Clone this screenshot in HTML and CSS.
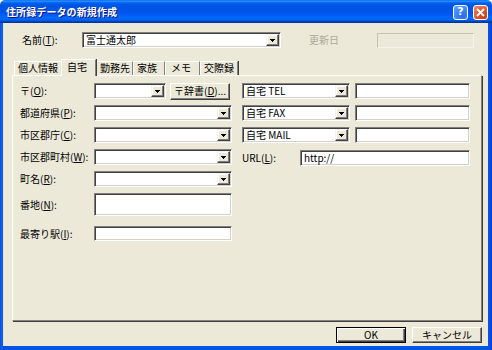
FILE: index.html
```html
<!DOCTYPE html>
<html lang="ja">
<head>
<meta charset="utf-8">
<title>住所録データの新規作成</title>
<link rel="stylesheet" href="styles.css">
</head>
<body>
<div class="window">
  <div class="titlebar">
    <span class="title">住所録データの新規作成</span>
    <div class="tb-buttons">
      <span class="tb-btn help">?</span>
      <span class="tb-btn close"><svg width="9" height="9" viewBox="0 0 9 9"><path d="M1 1 L8 8 M8 1 L1 8" stroke="#fff" stroke-width="1.8" fill="none"/></svg></span>
    </div>
  </div>
  <div class="frame">
    <div class="client">
      <div class="top-row">
        <span class="lbl name-lbl">名前(<u>T</u>):</span>
        <div class="field combo name-combo"><span class="val">富士通太郎</span><span class="drop"><span class="tri"></span></span></div>
        <span class="lbl date-lbl">更新日</span>
        <div class="date-box"></div>
      </div>
      <div class="tabs">
        <span class="tab t1">個人情報</span>
        <span class="tab t2 active">自宅</span>
        <span class="tab t3">勤務先</span>
        <span class="tab t4">家族</span>
        <span class="tab t5">メモ</span>
        <span class="tab t6">交際録</span>
      </div>
      <div class="panel">
        <div class="col left">
          <div class="row">
            <span class="lbl">〒(<u>O</u>):</span>
            <div class="field combo zip"><span class="val"></span><span class="drop"><span class="tri"></span></span></div>
            <span class="btn dict">〒辞書(<u>D</u>)...</span>
          </div>
          <div class="row">
            <span class="lbl">都道府県(<u>P</u>):</span>
            <div class="field combo wide"><span class="val"></span><span class="drop"><span class="tri"></span></span></div>
          </div>
          <div class="row">
            <span class="lbl">市区郡庁(<u>C</u>):</span>
            <div class="field combo wide"><span class="val"></span><span class="drop"><span class="tri"></span></span></div>
          </div>
          <div class="row">
            <span class="lbl">市区郡町村(<u>W</u>):</span>
            <div class="field combo wide"><span class="val"></span><span class="drop"><span class="tri"></span></span></div>
          </div>
          <div class="row">
            <span class="lbl">町名(<u>R</u>):</span>
            <div class="field combo wide"><span class="val"></span><span class="drop"><span class="tri"></span></span></div>
          </div>
          <div class="row tall">
            <span class="lbl">番地(<u>N</u>):</span>
            <div class="field wide"></div>
          </div>
          <div class="row station">
            <span class="lbl">最寄り駅(<u>I</u>):</span>
            <div class="field wide"></div>
          </div>
        </div>
        <div class="col right">
          <div class="row">
            <div class="field combo kind"><span class="val">自宅 TEL</span><span class="drop"><span class="tri"></span></span></div>
            <div class="field num"></div>
          </div>
          <div class="row">
            <div class="field combo kind"><span class="val">自宅 FAX</span><span class="drop"><span class="tri"></span></span></div>
            <div class="field num"></div>
          </div>
          <div class="row">
            <div class="field combo kind"><span class="val">自宅 MAIL</span><span class="drop"><span class="tri"></span></span></div>
            <div class="field num"></div>
          </div>
          <div class="row url-row">
            <span class="lbl url-lbl">URL(<u>L</u>):</span>
            <div class="field url"><span class="val">http://</span></div>
          </div>
        </div>
      </div>
      <div class="buttons">
        <span class="btn action default">OK</span>
        <span class="btn action">キャンセル</span>
      </div>
    </div>
  </div>
</div>
</body>
</html>
```

FILE: styles.css
```css
* { box-sizing: border-box; margin: 0; padding: 0; }

body {
  margin: 0;
  width: 492px;
  height: 350px;
  overflow: hidden;
  background: #fff;
  font-family: "Noto Sans CJK JP", "Liberation Sans", sans-serif;
  font-size: 10px;
  line-height: 12px;
  color: #000;
}

u { text-decoration: underline; text-underline-offset: 1px; }

.window {
  width: 492px;
  height: 350px;
  display: flex;
  flex-direction: column;
}

.titlebar {
  height: 23px;
  flex: none;
  display: flex;
  align-items: center;
  justify-content: space-between;
  padding: 0 4px 0 6px;
  border-radius: 5px 5px 0 0;
  background: linear-gradient(to bottom, #0058ee 0%, #3593ff 4%, #288eff 6%, #127dff 8%, #036ffc 10%, #0262ee 14%, #0057e5 20%, #0054e3 24%, #0055eb 56%, #005bf5 66%, #026afe 76%, #0062ef 86%, #0052d6 92%, #0040ab 94%, #003092 100%);
}

.title {
  color: #fff;
  font-weight: bold;
  font-size: 10px;
  letter-spacing: 0.1px;
  text-shadow: 1px 1px 0 #0f1089;
}

.tb-buttons { display: flex; gap: 5px; margin-top: 1px; }

.tb-btn {
  width: 15px;
  height: 15px;
  border: 1px solid #fff;
  border-radius: 3px;
  display: flex;
  align-items: center;
  justify-content: center;
  color: #fff;
  font-family: "DejaVu Sans", sans-serif;
  font-weight: bold;
  font-size: 11px;
}

.help { background: radial-gradient(circle at 70% 80%, #2f6bf0 0%, #3c86f8 50%, #6aa6ff 100%); }
.close { background: radial-gradient(circle at 80% 85%, #c83c14 0%, #e0582e 50%, #f09070 100%); }

.frame {
  flex: 1;
  display: flex;
  padding: 0 4px 4px 3px;
  background: linear-gradient(to right, #0831d9 0, #166aee 1px, #0055e5 3px, #0055e5 calc(100% - 4px), #0a4fe0 calc(100% - 2px), #0831d9 100%);
}

.client {
  flex: 1;
  background: #ece9d8;
  display: flex;
  flex-direction: column;
}

.top-row {
  display: flex;
  align-items: center;
  height: 16px;
  margin-top: 9px;
  padding-left: 19px;
}

.lbl { flex: none; white-space: nowrap; }
.name-lbl { width: 60px; }
.date-lbl { width: 68px; margin-left: 28px; color: #aca899; }

.field {
  background: #fff;
  border-top: 1px solid #808080;
  border-left: 1px solid #808080;
  border-right: 1px solid #fff;
  border-bottom: 1px solid #fff;
  box-shadow: inset 1px 1px 0 #404040, inset -1px -1px 0 #d4d0c8;
  padding: 1px;
  height: 16px;
  flex: none;
}

.combo { display: flex; align-items: stretch; }
.val { flex: 1; padding-left: 2px; line-height: 12px; white-space: nowrap; }

.drop {
  width: 13px;
  flex: none;
  background: #ece9d8;
  border-top: 1px solid #f4f3ee;
  border-left: 1px solid #f4f3ee;
  border-right: 1px solid #404040;
  border-bottom: 1px solid #404040;
  box-shadow: inset -1px -1px 0 #808080, inset 1px 1px 0 #fff;
  display: flex;
  align-items: center;
  justify-content: center;
}

.tri {
  width: 5px;
  height: 3px;
  background:
    linear-gradient(#000, #000) 0 0 / 5px 1px no-repeat,
    linear-gradient(#000, #000) 1px 1px / 3px 1px no-repeat,
    linear-gradient(#000, #000) 2px 2px / 1px 1px no-repeat;
}

.name-combo { width: 199px; }

.date-box {
  width: 97px;
  height: 15px;
  border: 1px solid #c5c2b2;
  border-right-color: #f4f3ee;
  border-bottom-color: #f4f3ee;
  background: #ece9d8;
}

.tabs {
  display: flex;
  align-items: flex-end;
  height: 16px;
  margin: 11px 0 0 11px;
  position: relative;
  z-index: 1;
}

.tab {
  height: 14px;
  padding-left: 3px;
  line-height: 12px;
  border-top: 1px solid #fff;
  border-left: 1px solid #fff;
  border-right: 1px solid #808080;
  box-shadow: 1px 0 0 #404040;
  white-space: nowrap;
  background: #ece9d8;
}

.t1 { width: 49px; }
.t2 { width: 31px; }
.t3 { width: 39px; padding-left: 5px; }
.t4 { width: 32px; }
.t5 { width: 35px; padding-left: 5px; }
.t6 { width: 38px; }

.tab.active {
  height: 17px;
  width: 35px;
  margin: 0 -2px -1px;
  padding-left: 5px;
  line-height: 14px;
  position: relative;
  z-index: 2;
}

.panel {
  width: 470px;
  height: 246px;
  margin-left: 9px;
  border-top: 1px solid #fff;
  border-left: 1px solid #fff;
  border-right: 1px solid #808080;
  border-bottom: 1px solid #808080;
  box-shadow: 1px 1px 0 #404040;
  padding: 7px 0 0 7px;
  display: flex;
  gap: 10px;
}

.col { display: flex; flex-direction: column; }
.left { width: 212px; }
.right { width: 228px; }

.row {
  display: flex;
  align-items: center;
  height: 16px;
  margin-bottom: 6px;
  flex: none;
}

.left .lbl { width: 74px; }

.zip { width: 72px; }
.wide { width: 138px; }

.btn {
  display: flex;
  align-items: center;
  justify-content: center;
  background: #ece9d8;
  border-top: 1px solid #fff;
  border-left: 1px solid #fff;
  border-right: 1px solid #404040;
  border-bottom: 1px solid #404040;
  box-shadow: inset -1px -1px 0 #808080;
  white-space: nowrap;
  flex: none;
}

.dict { width: 60px; height: 17px; margin-left: 4px; }

.row.tall { height: 23px; margin-bottom: 10px; }
.row.tall .field { height: 23px; }
.row.tall .lbl { align-self: center; }
.row.station { height: 15px; }
.row.station .field { height: 15px; }

.kind { width: 108px; }
.num { width: 115px; margin-left: 5px; }
.url-row { margin-top: 1px; }
.url-lbl { width: 58px; }
.url { width: 170px; }
.url .val { display: block; }

.buttons {
  display: flex;
  justify-content: flex-end;
  gap: 6px;
  margin-top: 6px;
  padding-right: 6px;
}

.action { width: 70px; height: 16px; }
.action.default {
  border: 1px solid #000;
  box-shadow: inset 1px 1px 0 #fff, inset -1px -1px 0 #404040, inset -2px -2px 0 #808080;
}
```
